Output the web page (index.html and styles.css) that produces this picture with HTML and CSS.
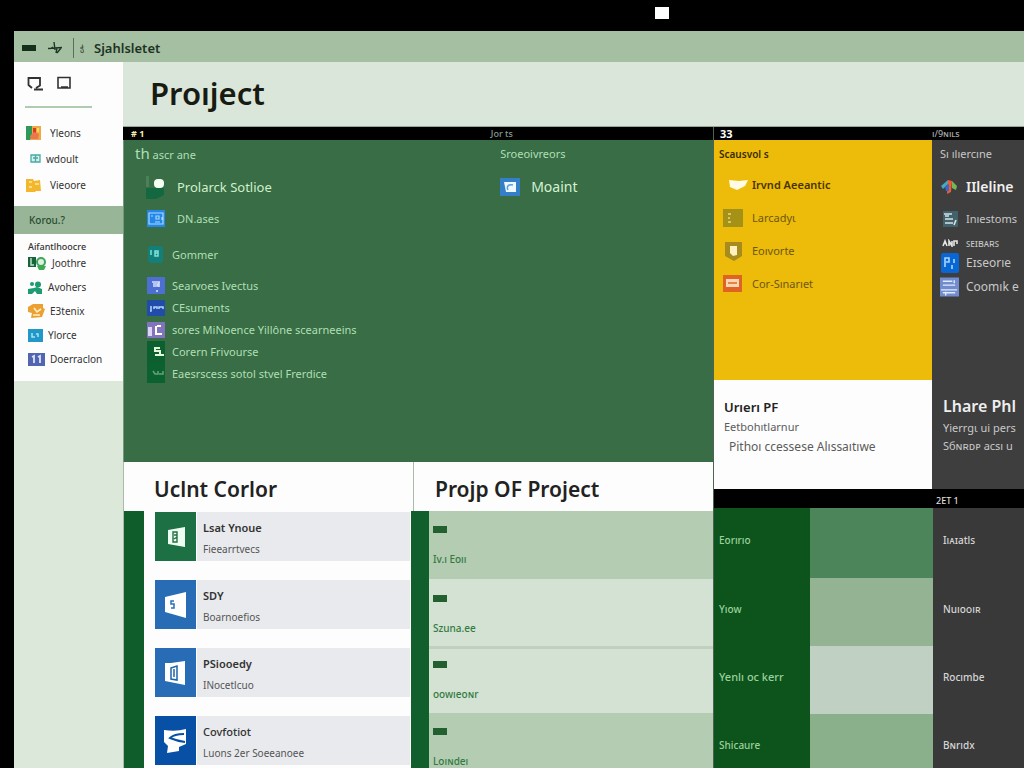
FILE: index.html
```html
<!DOCTYPE html>
<html lang="en">
<head>
<meta charset="utf-8">
<title>Proıject</title>
<link rel="stylesheet" href="styles.css">
</head>
<body>
<div class="screen">
  <div class="bezel"><span class="camera"></span></div>
  <div class="window">
    <header class="titlebar">
      <button class="tool" aria-label="Menu"><svg width="14" height="8" viewBox="0 0 14 8"><rect y="1" width="14" height="6" fill="#12301a"/></svg></button>
      <button class="tool" aria-label="Add"><svg width="15" height="14" viewBox="0 0 15 14"><path d="M0 7.500L14 6.500M6 1L7 9M9 7L8 12M2 8L5 6M9 12L13 7" fill="none" stroke="#1d3522" stroke-width="1.400"/></svg></button>
      <span class="divider"></span>
      <span class="mark">ჭ</span>
      <span class="app-name">Sjahlsletet</span>
    </header>
    <div class="body">
      <nav class="sidebar">
        <div class="nav-panel">
          <div class="nav-tools">
            <button class="tool" aria-label="Comment"><svg width="17" height="16" viewBox="0 0 17 16"><path d="M5 12L1.500 9V2H13V9.500L9 12M7 13.500H16" fill="none" stroke="#30342f" stroke-width="1.800"/></svg></button>
            <button class="tool" aria-label="Window"><svg width="14" height="14" viewBox="0 0 14 14"><path d="M1 1.500H13V12H1ZM4 11H11" fill="none" stroke="#30342f" stroke-width="1.600"/></svg></button>
          </div>
          <ul class="nav-list nav-top">
            <li><a href="#"><svg width="15" height="14" viewBox="0 0 15 14"><rect width="15" height="14" fill="#f0a94a"/><path d="M0 0H6V8L4 14H0Z" fill="#2f9a58"/><path d="M7 2H10V7H7Z" fill="#cf3f24"/><path d="M4 10L8 6L13 8L12 13H5Z" fill="#ec774c"/><path d="M11 2H13V6H11Z" fill="#ffd94d"/></svg>Yleons</a></li>
            <li class="nudge"><a href="#"><svg width="11" height="10" viewBox="0 0 11 10"><path d="M1 1H10V8H1ZM5.500 1V8M3 4H8" fill="#d6f0ec" stroke="#48aaa4" stroke-width="1.300"/></svg>wdoult</a></li>
            <li><a href="#"><svg width="15" height="13" viewBox="0 0 15 13"><path d="M0 0H7L8 2L14 1L15 12H10L9 13H0Z" fill="#f3b62c"/><path d="M3 3H6M9 5H13M3 8H6" stroke="#ffdf83" stroke-width="2"/></svg>Vieoore</a></li>
          </ul>
          <a class="nav-active" href="#">Korou.?</a>
          <p class="nav-label">Aifantlhoocre</p>
          <ul class="nav-list nav-bottom">
            <li><a href="#"><svg width="19" height="14" viewBox="0 0 19 14"><path d="M0 1H8V11H0Z" fill="#17633b"/><path d="M3 2V9H6" stroke="#bddfc6" stroke-width="1.500" fill="none"/><circle cx="13" cy="6" r="4" fill="#dff0de" stroke="#3ba55b" stroke-width="2"/><path d="M9 10H18L16 14H11Z" fill="#3dac50"/></svg>Joothre</a></li>
            <li><a href="#"><svg width="15" height="13" viewBox="0 0 15 13"><circle cx="4" cy="3" r="2" fill="#1d9b73"/><circle cx="10" cy="3.500" r="3" fill="#1d9b73"/><path d="M0 8L6 7L9 6L14 8V13H9L7 10L4 13H0Z" fill="#1d9b73"/></svg>Avohers</a></li>
            <li><a href="#"><svg width="17" height="14" viewBox="0 0 17 14"><path d="M0 3L5 0H15V4L17 5L14 13L3 14L4 9L0 8Z" fill="#eda032"/><path d="M6 4L9 8L13 5M5 11H12" stroke="#fff0c5" stroke-width="1.600" fill="none"/></svg>E3tenix</a></li>
            <li><a href="#"><svg width="15" height="13" viewBox="0 0 15 13"><rect width="15" height="13" fill="#2298c9"/><path d="M4 4V8H7M8 5H10V8" stroke="#a9e2f4" stroke-width="1.500" fill="none"/></svg>Ylorce</a></li>
            <li><a href="#"><svg width="17" height="13" viewBox="0 0 17 13"><rect width="17" height="13" fill="#5364b0"/><path d="M4 4L6 3V10M10 4L12 3V10" stroke="#dbe3ff" stroke-width="1.800" fill="none"/></svg>Doerraclon</a></li>
          </ul>
        </div>
      </nav>
      <main class="main">
        <div class="page-head"><h1>Proıject</h1></div>
        <div class="columns">
          <div class="col-left">
            <div class="strip split"><span class="lit">#&nbsp;1</span><span class="dim">Jor ts</span></div>
            <section class="green split">
              <div class="pad">
                <h3 class="group-title"><span class="lead">th</span> ascr ane</h3>
                <ul class="items">
                  <li class="r32 big"><svg width="20" height="24" viewBox="0 0 20 24"><path d="M0 1H3V12H0Z" fill="#4c8059"/><path d="M0 13H18V20L10 24H0Z" fill="#136840"/><rect x="8" y="4" width="10" height="9" rx="4" fill="#f3fff0"/></svg>Prolarck Sotlioe</li>
                  <li class="r32 mid"><svg width="20" height="18" viewBox="0 0 20 18"><rect x="1" width="18" height="17" fill="#2386e8"/><path d="M3 3H17V14H3ZM5 6H7M9 12H14M10 6H13V9H10ZM16 7V10" stroke="#a9d9ff" stroke-width="1.200" fill="none"/></svg>DN.ases</li>
                  <li class="r40"><svg width="20" height="18" viewBox="0 0 20 18"><rect x="2" width="15" height="17" rx="3" fill="#147e78"/><path d="M5 4V9M9 5H12V10H9ZM9 7H12" stroke="#7be2dc" stroke-width="1.500" fill="none"/></svg>Gommer</li>
                  <li class="r22"><svg width="20" height="18" viewBox="0 0 20 18"><rect x="1" width="18" height="17" fill="#4d6fd2"/><path d="M6 5H14M7 7H12V9H7M13 5V10M11 13V15" stroke="#d4e0ff" stroke-width="1.600" fill="none"/></svg>Searvoes Ivectus</li>
                  <li class="r22"><svg width="20" height="16" viewBox="0 0 20 16"><rect x="1" width="18" height="16" fill="#214daa"/><path d="M4 11H5V6M8 9V7H11V9M13 9V7H17V9" stroke="#bdd2ff" stroke-width="1.500" fill="none"/></svg>CEsuments</li>
                  <li class="r22"><svg width="20" height="16" viewBox="0 0 20 16"><rect x="1" width="18" height="16" fill="#8174bc"/><path d="M2 5H6V14H2Z" fill="#dcd5f4"/><path d="M10 4V12H16M11 4H15" stroke="#fff" stroke-width="2" fill="none"/></svg>sores MiNoence Yillône scearneeins</li>
                  <li class="r22"><svg width="20" height="22" viewBox="0 0 20 22"><rect x="1" width="18" height="22" fill="#0c602f"/><path d="M14 7H9V10H14V14H9M15 14H18" stroke="#e5f6db" stroke-width="2" fill="none"/></svg>Corern Frivourse</li>
                  <li class="r22"><svg width="20" height="22" viewBox="0 0 20 22"><rect x="1" width="18" height="20" fill="#0b6230"/><path d="M7 8L9 11H12V8M13 11H17V8" stroke="#62a474" stroke-width="1.500" fill="none"/></svg>Eaesrscess sotol stvel Frerdice</li>
                </ul>
              </div>
              <div class="pad">
                <h3 class="group-title">Sroeoivreors</h3>
                <ul class="items flush">
                  <li class="r32 large"><svg width="20" height="18" viewBox="0 0 20 18"><rect width="20" height="18" fill="#347fc8"/><path d="M4 4H16V14H6Z" fill="#eef8ff"/><path d="M8 12C6 8 9 6 13 7" stroke="#5a9ddc" stroke-width="1.500" fill="none"/></svg>Moaint</li>
                </ul>
              </div>
            </section>
            <div class="cards">
              <section class="card">
                <h2>Uclnt Corlor</h2>
                <ul class="tiles">
                  <li><span class="tile t-green"><svg width="18" height="20" viewBox="0 0 18 20"><path d="M1 3L18 0V20L1 17Z" fill="#edfff0"/><path d="M6 5H10V15H6ZM7 8H10M7 12L10 10" stroke="#276d42" stroke-width="1.400" fill="none"/></svg></span><span class="tile-text"><b>Lsat Ynoue</b><small>Fieearrtvecs</small></span></li>
                  <li><span class="tile t-blue"><svg width="22" height="26" viewBox="0 0 22 26"><path d="M0 5L21 0V26L0 20Z" fill="#fff"/><path d="M9 9H6V12H9V16H6" stroke="#2870b7" stroke-width="1.500" fill="none"/></svg></span><span class="tile-text"><b>SDY</b><small>Boarnoefios</small></span></li>
                  <li><span class="tile t-blue"><svg width="22" height="24" viewBox="0 0 22 24"><path d="M0 2H6L20 0V24L0 20Z" fill="#fff"/><path d="M6 7L12 5V19L6 18ZM9 8V16" stroke="#1d65ad" stroke-width="1.500" fill="none"/></svg></span><span class="tile-text"><b>PSiooedy</b><small>INocetlcuo</small></span></li>
                  <li><span class="tile t-deep"><svg width="24" height="24" viewBox="0 0 24 24"><path d="M0 1Q12 3 22 0V15L15 18V22L3 24L4 17L0 13Z" fill="#fff"/><path d="M20 5Q10 5 6 9Q13 12 21 13" stroke="#0751a5" stroke-width="2" fill="none"/></svg></span><span class="tile-text"><b class="soft">Covfotiot</b><small>Luons 2er Soeeanoee</small></span></li>
                </ul>
              </section>
              <section class="card">
                <h2>Projp OF Project</h2>
                <ul class="bands">
                  <li class="shade"><i></i>Iv.ı Eoıı</li>
                  <li class="ruled"><i></i>Szuna.ee</li>
                  <li class="short"><i></i>oowıeoɴr</li>
                  <li class="shade"><i></i>Loıɴdeı</li>
                </ul>
              </section>
            </div>
          </div>
          <div class="col-right">
            <div class="strip pair"><span class="white">33</span><span>ı/9ɴıʟs</span></div>
            <div class="pair">
              <div class="stack">
                <section class="yellow">
                  <h3 class="dark-title">Scausvol s</h3>
                  <ul>
                    <li class="strong"><svg width="20" height="14" viewBox="0 0 20 14"><path d="M0 2L10 3L19 2L16 8L8 12L1 9Z" fill="#fffbe4"/></svg>Irvnd Aeeantic</li>
                    <li><svg width="20" height="18" viewBox="0 0 20 18"><rect width="20" height="18" fill="#a59115"/><path d="M5 5H8M5 9H7M5 13H8" stroke="#e7d783" stroke-width="1.500"/></svg>Larcadyɩ</li>
                    <li><svg width="20" height="20" viewBox="0 0 20 20"><path d="M2 1H19V15L11 20L2 15Z" fill="#a68b1f"/><path d="M7 5H14V14L10 15L7 12Z" fill="#fff0bd"/></svg>Eoıvorte</li>
                    <li><svg width="20" height="17" viewBox="0 0 20 17"><rect width="19" height="17" fill="#df6424"/><path d="M3 4H16V12H3Z" fill="#ffd5b2"/><path d="M5 8H14" stroke="#df6424" stroke-width="1.500"/></svg>Cor-Sınarıet</li>
                  </ul>
                </section>
                <section class="summary">
                  <h3>Urıerı PF</h3>
                  <p>Eetbohıtlarnur</p>
                  <p class="indent">Pithoı ccessese Alıssaıtıwe</p>
                </section>
              </div>
              <section class="dark">
                <h3 class="group-title">Sı ılıercıne</h3>
                <ul class="items flush">
                  <li class="r32 large bold"><svg width="19" height="16" viewBox="0 0 19 16"><path d="M1 7L8 1V5L3 10Z" fill="#45a8c7"/><path d="M8 1L12 2L11 13L7 15Z" fill="#f05b31"/><path d="M12 2L17 7L16 11L12 9Z" fill="#75b657"/><path d="M5 8L9 5V12L6 12Z" fill="#3869c8"/></svg>IIleline</li>
                  <li class="r32"><svg width="19" height="16" viewBox="0 0 19 16"><rect x="3" width="15" height="16" fill="#42616b"/><path d="M4 3H12M5 8H13M5 12H13M16 9L14 14M5 5H9" stroke="#d3e5e8" stroke-width="1.600"/></svg>Inıestoms</li>
                  <li class="r16"><svg width="19" height="8" viewBox="0 0 19 8"><path d="M3 7L5 2L7 7M9 7V2L12 7V2M14 7V2H17V5" stroke="#e4e4e4" stroke-width="1.600" fill="none"/></svg>ꜱᴇɪʙᴀʀꜱ</li>
                  <li class="r24"><svg width="19" height="20" viewBox="0 0 19 20"><rect x="1" width="18" height="20" rx="2" fill="#0867d5"/><path d="M5 14V5H9V9H6M14 6V10M12 12V16" stroke="#a8d6ff" stroke-width="1.600" fill="none"/></svg>Eɪseorıe</li>
                  <li class="r24"><svg width="19" height="20" viewBox="0 0 20 20"><rect width="20" height="20" fill="#718dce"/><path d="M3 4H13M3 8H16M1 13H18M6 15V19M15 3V6M3 16H16" stroke="#e1eaff" stroke-width="1.500"/></svg>Coomık e</li>
                </ul>
                <div class="dark-summary">
                  <h3>Lhare Phl</h3>
                  <p>Yierrgɩ ui pers</p>
                  <p>Sбɴʀᴅᴘ acsı u</p>
                </div>
              </section>
            </div>
            <div class="strip tall pair"><span></span><span>2ET 1</span></div>
            <table class="matrix">
              <tr class="a"><th>Eorırıo</th><td class="swatch"></td><td>Iıᴀɪatls</td></tr>
              <tr class="b"><th>Yıow</th><td class="swatch"></td><td>Nuıoᴏıʀ</td></tr>
              <tr class="c"><th>Yenlı oc kerr</th><td class="swatch"></td><td>Rocımbe</td></tr>
              <tr class="d"><th>Shicaure</th><td class="swatch"></td><td>Bɴrıdx</td></tr>
            </table>
          </div>
        </div>
      </main>
    </div>
  </div>
</div>
</body>
</html>
```
FILE: styles.css
```css
* { box-sizing: border-box; }
body { margin: 0; background: #000; font: 11px/16px "Noto Sans", "Open Sans", sans-serif; color: #333; }
h1, h2, h3, p, ul { margin: 0; padding: 0; font-weight: 400; }
ul { list-style: none; }
a { color: inherit; text-decoration: none; }
svg { flex: none; }
.screen { height: 100vh; overflow: hidden; display: flex; flex-direction: column; padding-left: 14px; white-space: nowrap; }
.bezel { flex: none; height: 31px; padding: 7px 0 0 63%; }
.camera { display: block; width: 14px; height: 12px; background: #fff; margin-left: 5px; }
.window { flex: 1; display: flex; flex-direction: column; min-height: 0; }
.tool { display: flex; padding: 0; border: 0; background: none; }
.titlebar { flex: none; height: 31px; display: flex; align-items: center; gap: 10px; padding: 2px 8px 0; background: #a5bfa3; color: #1d3322; }
.divider { width: 1px; height: 20px; background: #58705b; }
.mark { font-size: 8px; width: 4px; margin-left: -4px; }
.app-name { font-size: 13px; font-weight: 600; }
.titlebar .tool + .tool { margin-left: 2px; }
.body { flex: 1; display: flex; min-height: 0; }

.sidebar { width: 109px; flex: none; background: #dce8da; }
.nav-panel { background: #fdfdfd; height: 319px; font-size: 10px; }
.nav-tools { display: flex; gap: 13px; height: 46px; width: 67px; margin: 0 11px; padding: 14px 2px 0; border-bottom: 2px solid #b1cbb1; }
.nav-list a { display: flex; align-items: center; gap: 5px; height: 24px; padding-left: 14px; }
.nav-top { padding: 12px 0 8px; }
.nav-top a { height: 26px; padding-left: 12px; gap: 9px; }
.nav-top .nudge a { padding-left: 16px; gap: 5px; }
.nav-active { display: block; height: 28px; padding: 6px 15px; background: #98b597; color: #294c31; font-weight: 500; }
.nav-label { padding: 5px 14px 0; height: 17px; font-size: 9px; line-height: 16px; font-weight: 500; }

.main { flex: 1; min-width: 0; display: flex; flex-direction: column; overflow: hidden; }
.page-head { flex: none; height: 65px; padding: 9px 27px; background: #dbe6da; border-bottom: 1px solid #99a798; }
h1 { font-size: 31px; line-height: 44px; font-weight: 600; color: #171b12; }
.columns { flex: 1; display: grid; grid-template-columns: minmax(0, 1fr) 311px; }
.col-left { display: flex; flex-direction: column; }
.strip { height: 13px; background: #000; color: #aaa; font-size: 9px; line-height: 13px; font-weight: 500; }
.strip span { padding-left: 8px; }
.strip .lit { color: #f4efad; font-weight: 700; }
.strip .dim { padding-left: 2px; color: #8c9b8d; }
.strip .white { padding-left: 6px; color: #fff; font-size: 11px; font-weight: 700; }
.split { display: grid; grid-template-columns: 62% 38%; }
.pair { display: grid; grid-template-columns: 218px minmax(0, 1fr); }
.pair > span + span { padding-left: 0; }
.green { height: 322px; background: #386d45; color: #b0dfb4; border-left: 1px solid #739b79; }
.pad { padding: 6px 11px; }
.group-title { font-size: 11px; line-height: 16px; height: 25px; }
.lead { font-size: 15px; line-height: 14px; }
.items li { display: flex; align-items: center; gap: 6px; }
.items:not(.flush) { padding-left: 11px; }
.items .big, .items .mid { gap: 11px; }
.items .big { font-size: 13px; color: #d1f0cb; }
.items .large { font-size: 14px; gap: 11px; color: #d5f2d2; }
.r40 { height: 40px; }
.r32 { height: 32px; }
.r24 { height: 24px; }
.r22 { height: 22px; }
.r16 { height: 16px; }

.cards { flex: 1; display: grid; grid-template-columns: 290px minmax(0, 1fr); background: #fdfdfd; }
.card { display: flex; flex-direction: column; border-left: 1px solid #a9bcab; }
.card h2 { height: 49px; padding: 11px 21px 0 30px; font-size: 21px; line-height: 32px; font-weight: 600; color: #222; }
.card + .card h2 { padding-left: 21px; }
.tiles { flex: 1; border-left: 20px solid #105d2c; padding: 1px 3px 0 11px; display: grid; align-content: start; gap: 19px; }
.tiles li { display: flex; height: 49px; background: #e8eaed; }
.tile { width: 42px; display: flex; align-items: center; justify-content: center; border-right: 1px solid #fff; }
.t-green { background: #1c7043; }
.t-blue { background: #286cb5; }
.t-deep { background: #0750a5; }
.tile-text { display: flex; flex-direction: column; justify-content: center; gap: 5px; padding: 4px 6px 0; font-size: 11px; }
.tile-text b { font-weight: 600; }
.tile-text .soft { font-weight: 500; }
.tile-text small { font-size: 10px; color: #555; }
.bands { border-left: 18px solid #105f2c; margin-left: -3px; color: #337b42; font-size: 10px; font-weight: 500; }
.bands li { height: 68px; padding: 3px 4px 0; display: flex; flex-direction: column; justify-content: center; gap: 18px; background: #d3e2d2; }
.bands i { width: 14px; height: 7px; background: #23602f; }
.bands .shade { background: #b4ccb2; }
.bands .ruled { height: 70px; padding-top: 6px; border-bottom: 3px solid #bfd0bf; }
.bands .short { height: 64px; padding-top: 0; }

.col-right { min-width: 0; border-left: 1px solid #4f6352; }
.yellow { height: 240px; padding: 6px 5px; background: #edbb0a; color: #6c5811; }
.yellow li { display: flex; align-items: center; gap: 9px; height: 33px; padding-left: 4px; }
.yellow .strong { padding-left: 10px; gap: 3px; font-weight: 600; color: #493500; }
.dark-title { font-size: 10px; font-weight: 600; line-height: 16px; height: 22px; color: #3c2c00; }
.summary { height: 109px; padding: 17px 10px; background: #fdfdfd; color: #5b5b5b; line-height: 20px; }
.summary h3 { font-size: 13px; font-weight: 600; color: #222; }
.summary .indent { padding-left: 5px; font-size: 12px; }
.dark { background: #3e3e3e; color: #c8c8c8; padding: 6px 0 0 8px; overflow: hidden; }
.dark .items li { gap: 7px; }
.dark .items .large { color: #f0f0f0; }
.dark .items .r24 { font-size: 12px; }
.bold { font-weight: 600; }
.dark .items .r16 { font-size: 10px; }
.dark-summary { padding: 94px 0 0 3px; line-height: 18px; }
.dark-summary h3 { font-size: 16px; line-height: 26px; font-weight: 600; color: #eee; }
.strip.tall { height: 19px; line-height: 24px; }
.strip.tall span + span { padding-left: 4px; color: #ddd; }
.matrix { width: 100%; table-layout: fixed; border-collapse: collapse; font-size: 10px; }
.matrix tr { height: 68px; }
.matrix .a { height: 70px; }
.matrix th, .matrix td { padding: 0; text-align: left; font-weight: 500; }
.matrix th { width: 96px; padding: 0 5px 6px; background: #0c541c; color: #9bd09b; }
.matrix .c th { font-size: 11px; }
.matrix td { padding: 0 10px 6px; background: #393939; color: #d5d5d5; }
.matrix .swatch { width: 123px; background: #4d855b; }
.matrix .b .swatch { background: #93b393; }
.matrix .c .swatch { background: #c0d1c3; }
.matrix .d .swatch { background: #8aaf8b; }
```
